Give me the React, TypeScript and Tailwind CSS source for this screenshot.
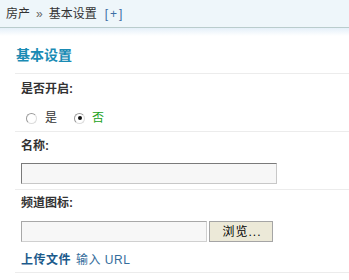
import React, { useState } from "react";

const font = "font-['Liberation_Sans','Noto_Sans_CJK_SC',sans-serif]";

const Radio = ({ checked, onClick }: { checked: boolean; onClick: () => void }) => (
  <span
    onClick={onClick}
    className="flex items-center justify-center w-[11px] h-[11px] rounded-full border border-[#9a9a9a] border-r-[#dcdcdc] border-b-[#dcdcdc] bg-white cursor-pointer"
  >
    {checked && <span className="w-[4px] h-[4px] rounded-full bg-[#111]" />}
  </span>
);

const App = () => {
  const [enabled, setEnabled] = useState(false);
  const [name, setName] = useState("");

  return (
    <div className={`${font} w-[349px] h-[280px] bg-white text-[12px] text-[#333] overflow-hidden`}>
      {/* breadcrumb bar */}
      <div className="h-[28px] bg-[#eef6fa] border-b border-[#b9cccc] flex items-center pl-[6px] leading-[14px]">
        <span>房产</span>
        <span className="mx-[6px] text-[#666]">»</span>
        <span>基本设置</span>
        <span className="ml-[8px] text-[#3b6ea5] tracking-[2px]">[+]</span>
      </div>
      <div className="h-[8px] bg-gradient-to-b from-[#e5f0f9] to-white" />

      <div className="pl-[15px]">
        <div className="pt-[11px] h-[38px] border-b border-[#ececec]">
          <h2 className="text-[14px] leading-[16px] font-bold text-[#1a8bb4] pl-[1px]">基本设置</h2>
        </div>

        {/* 是否开启 */}
        <div className="border-b border-[#ececec] pl-[6px] pt-[7px] pb-[5px]">
          <div className="font-bold leading-[16px]">是否开启:</div>
          <div className="mt-[13px] h-[16px] flex items-center">
            <span className="ml-[5px]">
              <Radio checked={enabled} onClick={() => setEnabled(true)} />
            </span>
            <span className={`ml-[8px] ${enabled ? "text-[#22a322]" : ""}`}>是</span>
            <span className="ml-[17px]">
              <Radio checked={!enabled} onClick={() => setEnabled(false)} />
            </span>
            <span className={`ml-[7px] ${!enabled ? "text-[#22a322]" : ""}`}>否</span>
          </div>
        </div>

        {/* 名称 */}
        <div className="border-b border-[#ececec] pl-[6px] pt-[6px] pb-[5px]">
          <div className="font-bold leading-[16px]">名称:</div>
          <input
            value={name}
            onChange={(e) => setName(e.target.value)}
            className="mt-[9px] block w-[256px] h-[21px] bg-[#f7f7f7] border border-[#7a7a7a] border-r-[#c8c8c8] border-b-[#c8c8c8] outline-none px-[2px] text-[12px]"
          />
        </div>

        {/* 频道图标 */}
        <div className="border-b border-[#ececec] pl-[6px] pt-[5px] pb-[4px]">
          <div className="font-bold leading-[16px]">频道图标:</div>
          <div className="mt-[10px] flex items-center gap-[2px]">
            <input
              className="block w-[186px] h-[21px] bg-[#f7f7f7] border border-[#a8a8a8] border-r-[#d0d0d0] border-b-[#d0d0d0] outline-none px-[2px] text-[12px]"
            />
            <button
              type="button"
              className="w-[64px] h-[21px] bg-[#ece9d8] border border-[#a5a5a5] text-[12px] text-black leading-[14px] pl-[2px] tracking-[1px]"
            >
              浏览...
            </button>
          </div>
          <div className="mt-[10px] leading-[16px] flex items-center">
            <span className="font-bold text-[#1d5b8c] cursor-pointer tracking-[0.5px]">上传文件</span>
            <span className="ml-[5px] text-[#356d9c] cursor-pointer tracking-[0.5px]">输入 URL</span>
          </div>
        </div>
      </div>
    </div>
  );
};

export default App;
